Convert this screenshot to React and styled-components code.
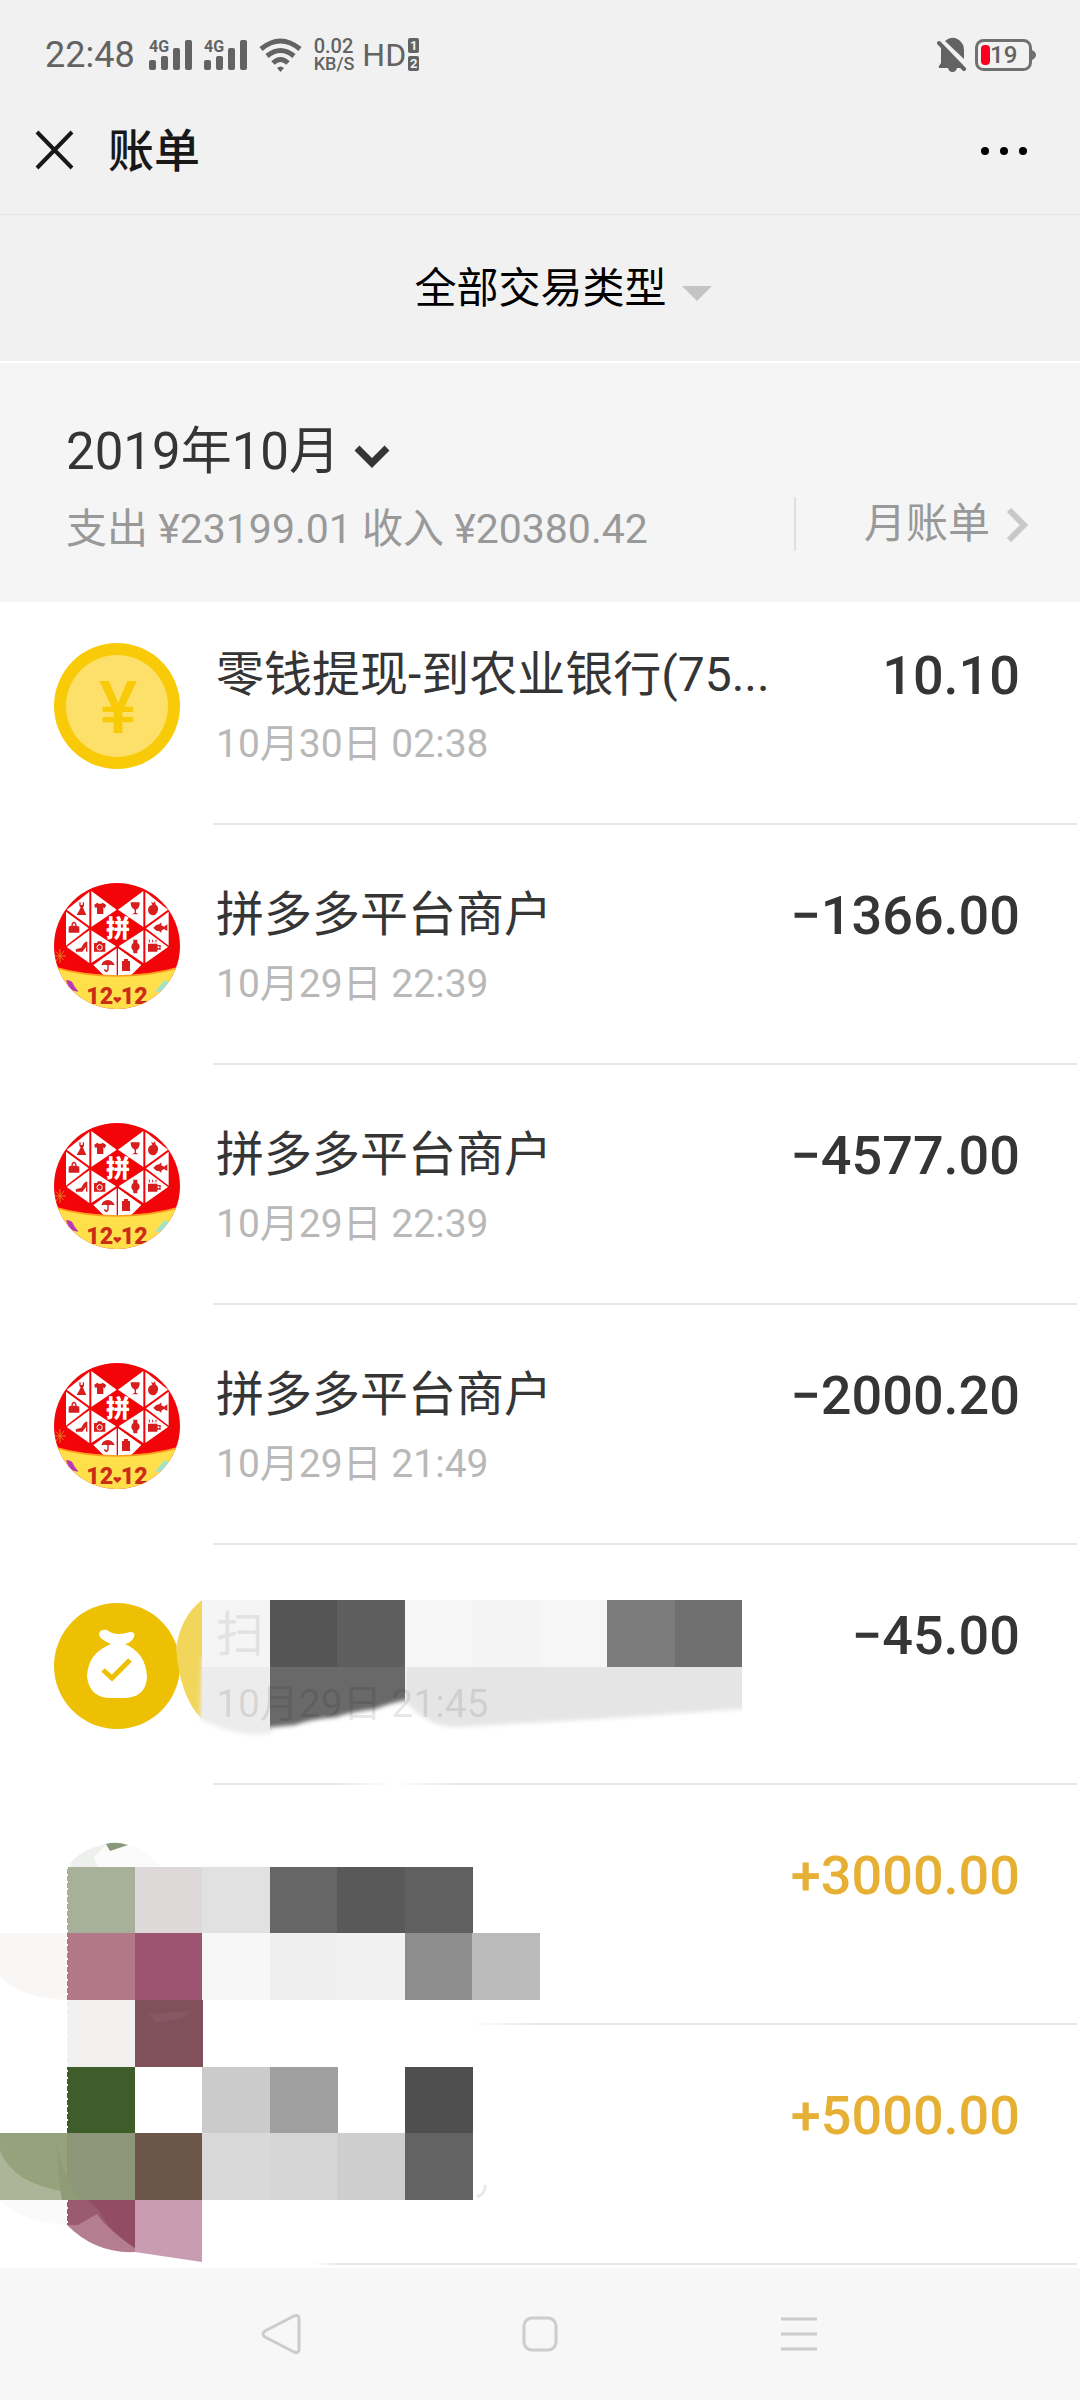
import React from "react";
import styled, { createGlobalStyle } from "styled-components";

const GlobalStyle = createGlobalStyle`
  * {
    box-sizing: border-box;
  }

  body {
    margin: 0;
    background: #f7f7f7;
    color: #353535;
    font-family: Roboto, "Noto Sans CJK SC", sans-serif;
  }

  button,
  select {
    margin: 0;
    padding: 0;
    border: 0;
    background: none;
    font: inherit;
    color: inherit;
    cursor: pointer;
  }
`;

const Page = styled.div`
  display: flex;
  flex-direction: column;
  min-height: 100vh;
`;

/* Status bar */
const StatusBar = styled.div`
  display: flex;
  align-items: center;
  justify-content: space-between;
  height: 87px;
  padding: 22px 44px 0 45px;
  background: #f1f1f1;
  color: #636363;
`;

const StatusGroup = styled.div`
  display: flex;
  align-items: center;
  gap: ${(props) => props.$gap}px;
`;

const Clock = styled.span`
  margin-right: 2px;
  font-size: 36px;
  line-height: 40px;
`;

const Speed = styled.span`
  display: flex;
  flex-direction: column;
  font-size: 20px;
  font-weight: 500;
  line-height: 18px;
`;

const SpeedUnit = styled.span`
  font-size: 18px;
`;

const Hd = styled.span`
  display: flex;
  align-items: center;
  gap: 2px;
  font-size: 32px;
  line-height: 34px;
`;

const SimStack = styled.span`
  display: flex;
  flex-direction: column;
  gap: 3px;
`;

const Sim = styled.span`
  width: 11px;
  border-radius: 2px;
  background: #636363;
  color: #f1f1f1;
  font-size: 13px;
  font-weight: 700;
  line-height: 15px;
  text-align: center;
`;

/* Header */
const Header = styled.header`
  display: flex;
  align-items: center;
  height: 128px;
  padding: 0 51px 0 33px;
  border-bottom: 1px solid #e4e4e4;
  background: #f1f1f1;
`;

const IconButton = styled.button`
  display: flex;
`;

const Title = styled.h1`
  flex: 1;
  margin: 0 0 0 32px;
  color: #181818;
  font-size: 46px;
  font-weight: 500;
  line-height: 60px;
`;

/* Type filter */
const Filter = styled.label`
  display: flex;
  align-items: center;
  justify-content: center;
  gap: 14px;
  height: 146px;
  padding: 2px 0 0 46px;
  background: #f1f1f1;
  color: #000;
`;

const PlainSelect = styled.select`
  appearance: none;
  outline: none;
  font-size: ${(props) => props.$size}px;
  line-height: 60px;
`;

const Caret = styled.span`
  margin-top: 8px;
  border: 15px solid transparent;
  border-top-color: #c4c4c4;
  border-bottom: 0;
`;

/* Month summary */
const Summary = styled.section`
  display: flex;
  align-items: flex-end;
  justify-content: space-between;
  padding: 59px 50px 48px 66px;
  border-top: 2px solid #fff;
  background: #f5f5f5;
`;

const Month = styled.label`
  display: flex;
  align-items: center;
  gap: 14px;

  svg {
    margin-top: 8px;
  }
`;

const Totals = styled.p`
  margin: 22px 0 0;
  color: #999;
  font-size: 41px;
  line-height: 50px;
`;

const MonthLink = styled.a`
  display: flex;
  align-items: center;
  gap: 16px;
  margin-bottom: 3px;
  padding-left: 68px;
  border-left: 2px solid #dfdfdf;
  color: #999;
  font-size: 42px;
  line-height: 54px;
  text-decoration: none;
`;

/* Bill list */
const List = styled.ul`
  position: relative;
  margin: 0;
  padding: 0 3px 3px 0;
  background: #fff;
  list-style: none;
`;

const Row = styled.li`
  position: relative;
  display: flex;
  gap: 33px;
  padding-left: 54px;
`;

const Avatar = styled.div`
  flex: none;
  width: 126px;
  height: 126px;
  margin-top: 58px;

  ${Row}:first-child & {
    margin-top: 41px;
  }

  svg {
    display: block;
  }
`;

const Body = styled.div`
  display: flex;
  flex: 1;
  min-width: 0;
  height: 240px;
  padding: 60px 57px 0 3px;
  border-bottom: 2px solid #e6e6e6;

  ${Row}:first-child & {
    height: 223px;
    padding-top: 43px;
  }
`;

const Info = styled.div`
  position: relative;
  z-index: 1;
  flex: 1;
  min-width: 0;
`;

const Name = styled.div`
  color: ${(props) => (props.$faded ? "#e2e2e2" : "#353535")};
  font-size: 48px;
  line-height: 60px;
  white-space: nowrap;
`;

const Time = styled.time`
  display: block;
  margin-top: 14px;
  color: ${(props) => (props.$faded ? "rgba(0, 0, 0, 0.11)" : "#b8b8b8")};
  font-size: 39px;
  line-height: 50px;
`;

const Amount = styled.div`
  color: ${(props) => (props.$income ? "#e6b035" : "#353535")};
  font-size: 54px;
  font-weight: 500;
  line-height: 62px;
`;

const Cover = styled.svg`
  position: absolute;
  left: 0;
  bottom: 0;
  pointer-events: none;
`;

/* System navigation */
const NavBar = styled.nav`
  display: flex;
  flex: 1;
  align-items: center;
  min-height: 132px;
  padding: 0 14%;
  background: #f7f7f7;
`;

const NavButton = styled.button`
  display: flex;
  flex: 1;
  justify-content: center;
`;

const Signal = () => (
  <svg width="43" height="44" viewBox="0 -6 43 44" fill="#636363">
    <rect x="0" y="21" width="7" height="10" rx="2" />
    <rect x="12" y="17" width="7" height="14" rx="2" />
    <rect x="24" y="9" width="7" height="22" rx="2" />
    <rect x="36" y="1" width="7" height="30" rx="2" />
    <text x="0" y="13" fontSize="16" fontWeight="700">
      4G
    </text>
  </svg>
);

const Wifi = () => (
  <svg width="43" height="34" viewBox="0 0 43 34" fill="none" stroke="#636363" strokeWidth="5">
    <path d="M2 11Q21.500-5 41 11" />
    <path d="M8 18Q21.500 7 35 18" />
    <path d="M14 25Q21.500 18 29 25" />
    <path d="M18 30Q21.500 27 25 30L21.500 34Z" fill="#636363" stroke="none" />
  </svg>
);

const Muted = () => (
  <svg width="30" height="35" viewBox="0 0 30 35" fill="#636363">
    <path d="M8 4Q15-2 22 3Q27 7 27 13V22Z" />
    <path d="M4 9L26 31H20Q19 35 15.500 35Q12 35 11 31H3Q1 31 2 29L4 26Z" />
    <path d="M2 6L27 32" stroke="#636363" strokeWidth="4" strokeLinecap="round" />
  </svg>
);

const Battery = () => (
  <svg width="61" height="34" viewBox="0 0 61 34">
    <rect x="1.500" y="2.500" width="54" height="29" rx="7" fill="none" stroke="#707070" strokeWidth="3" />
    <path d="M57 12Q61 14 61 17Q61 20 57 22Z" fill="#707070" />
    <rect x="6" y="7" width="9" height="20" rx="4" fill="#f9001f" />
    <text x="15" y="25" fontSize="24" fontWeight="500" fill="#636363">
      19
    </text>
  </svg>
);

const Close = () => (
  <svg width="43" height="43" viewBox="0 0 43 43" stroke="#181818" strokeWidth="4">
    <path d="M4 3L39 39M39 3L4 39" />
  </svg>
);

const More = () => (
  <svg width="50" height="20" viewBox="0 0 50 20">
    <circle cx="6" cy="10" r="4" />
    <circle cx="25" cy="10" r="4" />
    <circle cx="44" cy="10" r="4" />
  </svg>
);

const ChevronDown = () => (
  <svg width="36" height="24" viewBox="0 0 36 24" fill="none" stroke="#353535" strokeWidth="7">
    <path d="M3 4L18 19L33 4" />
  </svg>
);

const ChevronRight = () => (
  <svg width="24" height="36" viewBox="0 0 24 36" fill="none" stroke="#c8c8c8" strokeWidth="6">
    <path d="M3 4L18 19L3 34" />
  </svg>
);

const CoinLogo = () => (
  <svg viewBox="0 0 126 126">
    <circle cx="63" cy="63" r="63" fill="#f9ca07" />
    <circle cx="63" cy="63" r="51" fill="#fde06a" />
    <text x="64" y="90" fontSize="72" fontWeight="500" textAnchor="middle" fill="#f9ca07">
      ¥
    </text>
  </svg>
);

const BagLogo = () => (
  <svg viewBox="0 0 126 126">
    <circle cx="63" cy="63" r="63" fill="#edc004" />
    <path
      d="M57 41Q45 36 45 31Q46 26 53 27Q58 31 64 31Q70 31 76 29Q82 29 80 34Q77 40 71 41Q92 50 93 74Q92 94 71 95H55Q35 94 33 73Q34 50 57 41Z"
      fill="#fff"
    />
    <path d="M49 67L58 75L76 57" fill="none" stroke="#edc004" strokeWidth="5" />
  </svg>
);

// Half of the heart: six tiles, mirrored for the other side
const heartTiles =
  "M154 92L230 148L154 200ZM148 94V198L80 148ZM78 154L146 204L78 256ZM148 210V308L80 260ZM154 210L228 258L154 308ZM230 264V350H196L160 314Z";

const PinLogo = () => (
  <svg viewBox="42 68 378 378">
    <defs>
      <clipPath id="pin">
        <circle cx="231" cy="257" r="189" />
      </clipPath>
    </defs>
    <g clipPath="url(#pin)">
      <rect x="42" y="68" width="378" height="378" fill="#f20408" />
      <path d={heartTiles} fill="#fff" />
      <path d={heartTiles} fill="#fff" transform="matrix(-1 0 0 1 464 0)" />
      <g fill="#d81d1f">
        <path d="M118 126V136L122 142L110 164H139L129 142L132 136V126H128V134H122V126Z" />
        <path d="M162 134L172 127Q180 134 188 127L199 134L194 144L190 141V161H171V141L167 144Z" />
        <path d="M272 126H299Q299 146 288 148V157L296 162H276L284 157V148Q272 144 272 126Z" />
        <path d="M337 134L333 124L340 128L346 122V132Q356 138 354 150Q350 165 339 165Q325 163 324 149Q325 136 337 134Z" />
        <path d="M86 199Q92 196 94 196Q95 184 102 184Q109 184 110 196L118 199V217H86ZM98 196H106Q105 189 102 189Q99 189 98 196Z" />
        <path d="M340 202Q350 191 358 192L364 186V195L372 199L382 192V212L372 206L364 211V218L357 212Q347 212 340 202Z" />
        <path d="M107 267L124 262Q134 242 142 244V274H138V260L127 274H108Z" />
        <path d="M162 248H171L174 243H184L187 248H196V274H162Z" />
        <path d="M280 238H292V247Q300 252 299 260Q298 268 292 271V279H280V271Q274 266 274 259Q274 251 280 247Z" />
        <path d="M324 250H352V254H362V268H352V274H324ZM353 258V264H358V258Z" />
        <path d="M328 246V238M338 246V238M348 246V238" stroke="#d81d1f" strokeWidth="3" />
        <path d="M184 315Q188 300 203 299Q220 301 224 315L214 313L206 315V328Q205 336 198 335Q191 333 192 327H196Q199 333 202 327V315L194 313Z" />
        <path d="M252 296H264V302H270V332H246V302H252Z" />
      </g>
      <circle cx="179" cy="261" r="8" fill="none" stroke="#fff" strokeWidth="3" />
      <text x="234" y="229" fontSize="72" fontWeight="900" textAnchor="middle" fill="#fff">
        拼
      </text>
      <g stroke="#e8761f" strokeWidth="3">
        <path d="M60 266V308M42 287H78M48 274L72 300M72 272L48 302" />
      </g>
      <path d="M42 320Q231 372 420 320V446H42Z" fill="#ffe04a" />
      <path d="M42 321Q231 373 420 321" fill="none" stroke="#ff9b1c" strokeWidth="5" />
      <path d="M78 360Q96 358 102 376L116 394Q96 394 86 380Z" fill="#b53ab4" />
      <path d="M384 360Q366 362 360 378L344 394Q364 396 376 384Z" fill="#9be3d3" />
      <g fill="#cb2d19" fontSize="70" fontWeight="900" textAnchor="middle">
        <text x="179" y="430">
          12
        </text>
        <text x="283" y="430">
          12
        </text>
      </g>
      <path d="M232 428L220 416Q221 406 232 412Q243 406 244 416Z" fill="#cb2d19" />
    </g>
  </svg>
);

const nameCells = [
  [202, 68, "#f5f5f5"],
  [270, 67, "#555"],
  [337, 68, "#5e5e5e"],
  [405, 67, "#f6f6f6"],
  [472, 68, "#f4f4f4"],
  [540, 67, "#f6f6f6"],
  [607, 68, "#7c7c7c"],
  [675, 67, "#707070"],
];

const NameMosaic = () => (
  <Cover width="742" height="240" viewBox="0 0 742 240">
    <defs>
      <linearGradient id="lineGap">
        <stop offset="0" stopColor="#fff" stopOpacity="0" />
        <stop offset="0.5" stopColor="#fff" />
        <stop offset="1" stopColor="#fff" stopOpacity="0" />
      </linearGradient>
      <filter id="soft">
        <feGaussianBlur stdDeviation="2" />
      </filter>
      <clipPath id="names">
        <rect x="170" y="56" width="572" height="150" />
      </clipPath>
      <clipPath id="darkNames">
        <rect x="270" y="122" width="135" height="80" />
      </clipPath>
    </defs>
    <path d="M202 55Q181 71 176 103Q180 153 202 174Z" fill="#f2d65c" />
    <g clipPath="url(#names)">
      <path d="M202 112H272V188Q240 194 200 174Z" fill="#ececec" filter="url(#soft)" />
      <path d="M405 112H756V163L600 174L460 182Q430 184 405 156Z" fill="#e5e5e5" filter="url(#soft)" />
      <path d="M202 122H270V184Q230 186 202 172Z" fill="#ececec" />
    </g>
    <g clipPath="url(#darkNames)">
      <path d="M250 110H420V152Q390 158 375 164Q345 168 337 172Q310 174 295 180L250 184Z" fill="#696969" filter="url(#soft)" />
    </g>
    {nameCells.map(([x, width, fill]) => (
      <rect key={x} x={x} y="55" width={width} height="67" fill={fill} />
    ))}
    <rect x="330" y="237" width="130" height="3" fill="url(#lineGap)" />
  </Cover>
);

const personCells = [
  [67, 83, "#a7b19a"],
  [135, 83, "#ddd9d9"],
  [202, 83, "#e1e1e1"],
  [270, 83, "#666"],
  [337, 83, "#595959"],
  [405, 83, "#606060"],
  [67, 149, "#b27888"],
  [135, 149, "#9d5470"],
  [202, 149, "#f7f7f7"],
  [270, 149, "#efefef"],
  [337, 149, "#f1f1f1"],
  [405, 149, "#8d8d8d"],
  [472, 149, "#bababa"],
  [67, 216, "#f1f0ef"],
  [135, 216, "#80505b"],
  [67, 283, "#3f5d2b"],
  [202, 283, "#cbcbcb"],
  [270, 283, "#9f9f9f"],
  [405, 283, "#4f4f4f"],
  [67, 349, "#8e967a"],
  [135, 349, "#6c564a"],
  [202, 349, "#d9d9d9"],
  [270, 349, "#d6d6d6"],
  [337, 349, "#cecece"],
  [405, 349, "#636363"],
];

const PeopleMosaic = () => (
  <Cover width="560" height="484" viewBox="0 0 560 484">
    <defs>
      <linearGradient id="lineStart">
        <stop offset="0.8" stopColor="#fff" />
        <stop offset="1" stopColor="#fff" stopOpacity="0" />
      </linearGradient>
    </defs>
    <rect x="200" y="237" width="340" height="6" fill="url(#lineStart)" />
    <rect x="200" y="477" width="140" height="6" fill="url(#lineStart)" />
    <path d="M68 83Q86 60 118 59Q146 62 160 83Z" fill="#fafbfa" />
    <path d="M70 80Q80 66 106 60L94 74L98 83H72Z" fill="#eef0ed" />
    <path d="M106 60Q116 57 128 61L110 67Z" fill="#8a997c" />
    <path d="M0 149H67V216Q20 214 0 193Z" fill="#f8f7f5" />
    <path d="M0 349H67V416H0Z" fill="#acb598" />
    <path d="M0 349H67V408Q12 400 0 366Z" fill="#96a27c" />
    <path d="M0 416H67V441Q20 438 0 416Z" fill="#fbfafb" />
    <path d="M67 416H135V468Q96 470 67 441Z" fill="#b57e90" />
    <path d="M67 416H135V464Q108 446 97 430L78 441H67Z" fill="#9a5a70" />
    <path d="M88 416H135V464Q108 446 100 428Z" fill="#924c63" />
    <path d="M135 416H202V478L135 468Z" fill="#c99cb2" />
    {personCells.map(([x, y, fill]) => (
      <rect key={`${x}-${y}`} x={x} y={y} width="68" height="67" fill={fill} />
    ))}
    <path d="M148 230L192 227L182 234L156 239Z" fill="#875864" />
    <path d="M56 349Q58 390 82 416H62Q58 390 56 349Z" fill="#8f9a76" />
    <path d="M485 401Q486 410 477 413" fill="none" stroke="#e8e8e8" strokeWidth="3" />
    <path d="M67 83V349M67 416V441" stroke="#fff" strokeWidth="2" strokeDasharray="2 5" />
  </Cover>
);

const bills = [
  { logo: <CoinLogo />, name: "零钱提现-到农业银行(75...", time: "10月30日 02:38", amount: "10.10" },
  { logo: <PinLogo />, name: "拼多多平台商户", time: "10月29日 22:39", amount: "−1366.00" },
  { logo: <PinLogo />, name: "拼多多平台商户", time: "10月29日 22:39", amount: "−4577.00" },
  { logo: <PinLogo />, name: "拼多多平台商户", time: "10月29日 21:49", amount: "−2000.20" },
  { logo: <BagLogo />, name: "扫", time: "10月29日 21:45", amount: "−45.00", cover: <NameMosaic /> },
  { amount: "+3000.00", income: true },
  { amount: "+5000.00", income: true },
];

const Bill = ({ logo, name, time, amount, income, cover }) => (
  <Row>
    <Avatar>{logo}</Avatar>
    <Body>
      <Info>
        {name && <Name $faded={!!cover}>{name}</Name>}
        {time && <Time $faded={!!cover}>{time}</Time>}
      </Info>
      <Amount $income={income}>{amount}</Amount>
    </Body>
    {cover}
  </Row>
);

const App = () => (
  <Page>
    <GlobalStyle />
    <StatusBar>
      <StatusGroup $gap={12}>
        <Clock>22:48</Clock>
        <Signal />
        <Signal />
        <Wifi />
        <StatusGroup $gap={8}>
          <Speed>
            <span>0.02</span>
            <SpeedUnit>KB/S</SpeedUnit>
          </Speed>
          <Hd>
            HD
            <SimStack>
              <Sim>1</Sim>
              <Sim>2</Sim>
            </SimStack>
          </Hd>
        </StatusGroup>
      </StatusGroup>
      <StatusGroup $gap={8}>
        <Muted />
        <Battery />
      </StatusGroup>
    </StatusBar>

    <Header>
      <IconButton aria-label="关闭">
        <Close />
      </IconButton>
      <Title>账单</Title>
      <IconButton aria-label="更多">
        <More />
      </IconButton>
    </Header>

    <Filter>
      <PlainSelect $size={42} aria-label="交易类型">
        <option>全部交易类型</option>
      </PlainSelect>
      <Caret />
    </Filter>

    <Summary>
      <div>
        <Month>
          <PlainSelect $size={51} aria-label="月份">
            <option>2019年10月</option>
          </PlainSelect>
          <ChevronDown />
        </Month>
        <Totals>支出 ¥23199.01 收入 ¥20380.42</Totals>
      </div>
      <MonthLink href="#month">
        月账单
        <ChevronRight />
      </MonthLink>
    </Summary>

    <List>
      {bills.map((bill, index) => (
        <Bill key={index} {...bill} />
      ))}
      <PeopleMosaic />
    </List>

    <NavBar>
      <NavButton aria-label="返回">
        <svg width="40" height="42" viewBox="0 0 40 42" fill="none" stroke="#ccc" strokeWidth="3">
          <path d="M33 3Q38 1 38 6V36Q38 41 33 39L4 24Q0 21 4 18Z" />
        </svg>
      </NavButton>
      <NavButton aria-label="主页">
        <svg width="36" height="36" viewBox="0 0 36 36" fill="none" stroke="#ccc" strokeWidth="3">
          <rect x="2" y="2" width="32" height="32" rx="8" />
        </svg>
      </NavButton>
      <NavButton aria-label="最近任务">
        <svg width="36" height="36" viewBox="0 0 36 36" stroke="#ccc" strokeWidth="3">
          <path d="M0 3H36M0 18H36M0 33H36" />
        </svg>
      </NavButton>
    </NavBar>
  </Page>
);

export default App;
